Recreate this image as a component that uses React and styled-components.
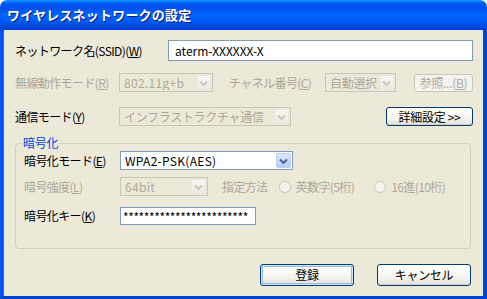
import React from "react";
import styled, { createGlobalStyle } from "styled-components";

const Global = createGlobalStyle`
  html, body { margin: 0; padding: 0; background: #ffffff; }
  body { font-family: "Noto Sans CJK JP", "Liberation Sans", sans-serif; }
  * { box-sizing: border-box; }
`;

const Window = styled.div`
  width: 487px;
  height: 299px;
  display: flex;
  flex-direction: column;
  font-family: "Noto Sans CJK JP", "Liberation Sans", sans-serif;
  font-size: 12px;
  color: #000;
`;

const TitleBar = styled.div`
  height: 30px;
  flex: none;
  display: flex;
  align-items: center;
  padding: 0 0 1px 7px;
  border-radius: 7px 7px 0 0;
  background: linear-gradient(
    to bottom,
    #0997ff 0px,
    #0053ee 4px,
    #0050ee 8px,
    #0066ff 15px,
    #0058f0 22px,
    #0049dd 27px,
    #003dd7 30px
  );
  color: #fff;
  font-weight: bold;
  font-size: 13px;
  letter-spacing: 0.2px;
  text-shadow: 1px 1px 0 #0a1883;
`;

const Body = styled.div`
  flex: 1;
  background: #ece9d8;
  border-left: 3px solid #0055ea;
  border-right: 4px solid #0046d5;
  border-bottom: 3px solid #0043cf;
  box-shadow: inset 1px 0 0 #166aee;
  padding: 10px 10px 0 12px;
  display: flex;
  flex-direction: column;
`;

const Row = styled.div`
  display: flex;
  align-items: center;
  height: ${(p) => p.$h || 19}px;
  margin-top: ${(p) => p.$mt || 0}px;
`;

const Label = styled.span`
  flex: none;
  width: ${(p) => (p.$w ? `${p.$w}px` : "auto")};
  margin-left: ${(p) => p.$ml || 0}px;
  color: ${(p) => (p.$disabled ? "#aca899" : "#000")};
  white-space: nowrap;
  letter-spacing: -0.6px;
  font-size: 12px;
  line-height: 1;
`;

const Key = styled.span`
  text-decoration: underline;
`;

const TextInput = styled.div`
  flex: ${(p) => (p.$w ? "none" : 1)};
  width: ${(p) => (p.$w ? `${p.$w}px` : "auto")};
  height: 100%;
  border: 1px solid #7f9db9;
  background: #fff;
  display: flex;
  align-items: center;
  padding-left: ${(p) => p.$pl || 6}px;
  font-family: "Noto Sans CJK JP", "Liberation Sans", sans-serif;
  font-size: 12px;
  overflow: hidden;
  white-space: nowrap;
  letter-spacing: ${(p) => p.$ls || 0}px;
`;

const Select = styled.div`
  flex: none;
  width: ${(p) => p.$w}px;
  height: 100%;
  margin-left: ${(p) => p.$ml || 0}px;
  border: 1px solid ${(p) => (p.$disabled ? "#c9c7ba" : "#7f9db9")};
  background: ${(p) => (p.$disabled ? "#ece9d8" : "#fff")};
  display: flex;
  align-items: stretch;
  padding: 1px;
`;

const SelectText = styled.span`
  flex: 1;
  display: flex;
  align-items: center;
  padding-left: 3px;
  color: ${(p) => (p.$disabled ? "#aca899" : "#000")};
  font-family: "Noto Sans CJK JP", sans-serif;
  font-size: 12px;
  letter-spacing: ${(p) => (p.$latin ? "0.3px" : "-0.3px")};
  white-space: nowrap;
  overflow: hidden;
`;

const DropButton = styled.span`
  flex: none;
  width: 15px;
  border-radius: 2px;
  display: flex;
  align-items: center;
  justify-content: center;
  background: ${(p) =>
    p.$disabled
      ? "linear-gradient(#f7f7f4, #eceae1)"
      : "linear-gradient(#dbe6fe, #b9cdfa)"};
  border: 1px solid ${(p) => (p.$disabled ? "#e8e6dd" : "#b7cbf8")};
`;

const Arrow = ({ disabled }) => (
  <svg width="9" height="6" viewBox="0 0 9 6">
    <path
      d="M1 1.5 L4.5 5 L8 1.5"
      fill="none"
      stroke={disabled ? "#c9c7ba" : "#4d6185"}
      strokeWidth="2"
    />
  </svg>
);

const Combo = ({ w, ml, disabled, latin, children }) => (
  <Select $w={w} $ml={ml} $disabled={disabled}>
    <SelectText $disabled={disabled} $latin={latin}>
      {children}
    </SelectText>
    <DropButton $disabled={disabled}>
      <Arrow disabled={disabled} />
    </DropButton>
  </Select>
);

const Button = styled.button`
  flex: none;
  width: ${(p) => p.$w}px;
  height: ${(p) => p.$h || 22}px;
  margin-left: ${(p) => (p.$auto ? "auto" : `${p.$ml || 0}px`)};
  padding: 0;
  border: 1px solid ${(p) => (p.$disabled ? "#c9c7ba" : "#003c74")};
  border-radius: 3px;
  background: ${(p) =>
    p.$disabled ? "#f4f3ee" : "linear-gradient(#ffffff 0%, #f5f4ef 60%, #e3e1d6 100%)"};
  box-shadow: ${(p) =>
    p.$default
      ? "inset 0 0 0 1px #cee7ff, inset 0 0 0 2px #98b8ea"
      : p.$disabled
      ? "none"
      : "inset 0 -1px 0 #d6d0c5"};
  color: ${(p) => (p.$disabled ? "#aca899" : "#000")};
  font-family: "Noto Sans CJK JP", sans-serif;
  font-size: 12px;
  letter-spacing: -0.3px;
  line-height: 1;
  display: flex;
  align-items: center;
  justify-content: center;
`;

const Group = styled.fieldset`
  margin: 11px 0 0 0;
  margin-right: 2px;
  border: 1px solid #d0d0bf;
  border-radius: 4px;
  padding: 0 0 0 8px;
  height: 112px;
  display: flex;
  flex-direction: column;
`;

const Legend = styled.legend`
  color: #0046d5;
  font-size: 12px;
  padding: 0 1px;
  margin-left: -2px;
  letter-spacing: -0.3px;
  line-height: 1;
`;

const Radio = styled.span`
  display: inline-flex;
  align-items: center;
  margin-left: ${(p) => p.$ml || 0}px;
  color: #aca899;
  white-space: nowrap;
  letter-spacing: -0.6px;
`;

const RadioDot = styled.span`
  width: 12px;
  height: 12px;
  border-radius: 50%;
  border: 1px solid #cac8bb;
  background: #f4f3ee;
  margin-right: 5px;
  flex: none;
`;

const Footer = styled.div`
  display: flex;
  justify-content: flex-end;
  gap: 23px;
  margin-top: 15px;
  margin-right: 2px;
`;

export default function App() {
  return (
    <>
      <Global />
      <Window>
        <TitleBar>ワイヤレスネットワークの設定</TitleBar>
        <Body>
          <Row $h={21}>
            <Label $w={153}>
              ネットワーク名(SSID)(<Key>W</Key>)
            </Label>
            <TextInput>aterm-XXXXXX-X</TextInput>
          </Row>
          <Row $mt={12}>
            <Label $w={104} $disabled>
              無線動作モード(<Key>R</Key>)
            </Label>
            <Combo w={94} disabled latin>
              802.11g+b
            </Combo>
            <Label $w={96} $ml={16} $disabled>
              チャネル番号(<Key>C</Key>)
            </Label>
            <Combo w={71} disabled>
              自動選択
            </Combo>
            <Button $w={59} $h={18} $auto $disabled>
              参照...(<Key>B</Key>)
            </Button>
          </Row>
          <Row $mt={15}>
            <Label $w={104}>
              通信モード(<Key>Y</Key>)
            </Label>
            <Combo w={172} disabled>
              インフラストラクチャ通信
            </Combo>
            <Button $w={87} $h={19} $auto>
              詳細設定 &gt;&gt;
            </Button>
          </Row>
          <Group>
            <Legend>暗号化</Legend>
            <Row $mt={2}>
              <Label $w={96}>
                暗号化モード(<Key>E</Key>)
              </Label>
              <Combo w={173} latin>
                WPA2-PSK(AES)
              </Combo>
            </Row>
            <Row $mt={7}>
              <Label $w={96} $disabled>
                暗号強度(<Key>L</Key>)
              </Label>
              <Combo w={88} disabled latin>
                64bit
              </Combo>
              <Label $ml={14} $disabled>
                指定方法
              </Label>
              <Radio $ml={11}>
                <RadioDot />
                英数字(5桁)
              </Radio>
              <Radio $ml={20}>
                <RadioDot />
                16進(10桁)
              </Radio>
            </Row>
            <Row $mt={11} $h={18}>
              <Label $w={96}>
                暗号化キー(<Key>K</Key>)
              </Label>
              <TextInput $w={136} $pl={2} $ls={-0.4}>
                ************************
              </TextInput>
            </Row>
          </Group>
          <Footer>
            <Button $w={94} $default>
              登録
            </Button>
            <Button $w={94}>キャンセル</Button>
          </Footer>
        </Body>
      </Window>
    </>
  );
}
